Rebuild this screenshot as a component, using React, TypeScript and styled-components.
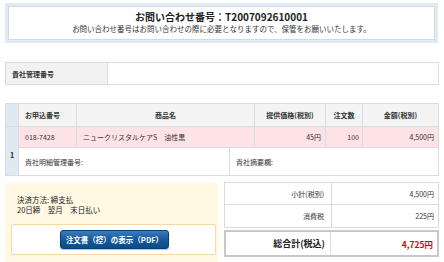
import React from "react";
import styled, { createGlobalStyle } from "styled-components";

const Global = createGlobalStyle`
  html, body { margin: 0; padding: 0; background: #fff; }
  body { font-family: "Noto Sans CJK JP", "Noto Sans", sans-serif; color: #333; }
  * { box-sizing: border-box; }
`;

const Page = styled.div`
  width: 444px;
  height: 262px;
  overflow: hidden;
  padding: 3px 5px 0 5px;
`;

const TopBox = styled.div`
  margin-right: 1px;
  border: 3px solid #e1eaf2;
  box-shadow: inset 0 0 0 1px #cddbe6;
  background: #fff;
  padding: 5px 0 6px;
  text-align: center;
`;

const Title = styled.div`
  font-size: 10px;
  font-weight: bold;
  line-height: 12px;
  color: #222;
`;

const Sub = styled.div`
  font-size: 7.5px;
  line-height: 11px;
  color: #333;
`;

const Grid = styled.div<{ $cols: string; $rows: string; $mt?: number }>`
  display: grid;
  grid-template-columns: ${(p) => p.$cols};
  grid-template-rows: ${(p) => p.$rows};
  gap: 1px;
  padding: 1px;
  background: #dcdcdc;
  margin-top: ${(p) => p.$mt || 0}px;
`;

const Cell = styled.div<{
  $bg?: string;
  $align?: "left" | "center" | "right";
  $bold?: boolean;
  $pr?: number;
}>`
  background: ${(p) => p.$bg || "#fff"};
  display: flex;
  align-items: center;
  justify-content: ${(p) =>
    p.$align === "center" ? "center" : p.$align === "right" ? "flex-end" : "flex-start"};
  font-size: 7px;
  font-weight: ${(p) => (p.$bold ? "bold" : "normal")};
  color: #333;
  padding: 0 ${(p) => p.$pr ?? (p.$align === "right" ? 4 : 6)}px 0 6px;
  white-space: nowrap;
  overflow: hidden;
`;

const IndexCell = styled.div<{ $rows?: number }>`
  background: #dfe9f1;
  grid-row: ${(p) => (p.$rows ? `span ${p.$rows}` : "auto")};
  display: flex;
  align-items: center;
  justify-content: center;
  padding-top: 8px;
  font-size: 7px;
  font-weight: bold;
  color: #222;
`;

const SubRow = styled.div`
  grid-column: span 5;
  display: grid;
  grid-template-columns: 210px 1fr;
  gap: 1px;
  background: #dcdcdc;
`;

const Bottom = styled.div`
  margin-top: 6px;
  display: grid;
  grid-template-columns: 213px 215px;
  column-gap: 6px;
  align-items: start;
`;

const PayPanel = styled.div`
  margin-top: 1px;
  background: #fff8e2;
  padding: 12px 2px 10px 6px;
  height: 81px;
`;

const PayText = styled.div`
  font-size: 7.5px;
  line-height: 10px;
  padding-left: 6px;
  color: #222;
`;

const BtnBox = styled.div`
  margin-top: 9px;
  border: 1px solid #f6d7a6;
  border-radius: 2px;
  background: #fff;
  height: 31px;
  display: flex;
  align-items: center;
  justify-content: center;
`;

const PdfButton = styled.button`
  width: 109px;
  height: 19px;
  border: 1px solid #0b3e70;
  border-radius: 3px;
  background: linear-gradient(#3a7cbc, #165a9b 50%, #0c4b87);
  color: #fff;
  font-family: inherit;
  font-size: 7.5px;
  font-weight: bold;
  padding: 0;
  margin-left: 2px;
  box-shadow: 0 1px 1px rgba(0, 0, 0, 0.25);
`;

const Summary = styled.div`
  display: flex;
  flex-direction: column;
  gap: 2px;
`;

const TotalRow = styled.div`
  display: grid;
  grid-template-columns: 104px 1fr;
  gap: 1px;
  height: 27px;
  border: 2px solid #c8c8c8;
  background: #dedede;
`;

const TotalCell = styled.div<{ $red?: boolean }>`
  background: #fff;
  display: flex;
  align-items: center;
  justify-content: flex-end;
  padding: 0 ${(p) => (p.$red ? 4 : 5)}px 0 0;
  font-size: ${(p) => (p.$red ? 8.5 : 9)}px;
  font-weight: bold;
  color: ${(p) => (p.$red ? "#e00000" : "#222")};
`;

const PINK = "#fde2e6";
const HEAD = "#f4f4f4";

export default function App() {
  return (
    <>
      <Global />
      <Page>
        <TopBox>
          <Title>お問い合わせ番号：T2007092610001</Title>
          <Sub>お問い合わせ番号はお問い合わせの際に必要となりますので、保管をお願いいたします。</Sub>
        </TopBox>

        <Grid $cols="101px 1fr" $rows="21px" $mt={19}>
          <Cell $bg="#f2f2f2" $bold>貴社管理番号</Cell>
          <Cell />
        </Grid>

        <Grid $cols="12px 57px 177px 70px 36px 1fr" $rows="22px 20px 27px" $mt={18}>
          <IndexCell />
          <Cell $bg={HEAD} $bold>お申込番号</Cell>
          <Cell $bg={HEAD} $bold $align="center">商品名</Cell>
          <Cell $bg={HEAD} $bold $align="center">提供価格(税別)</Cell>
          <Cell $bg={HEAD} $bold $align="center">注文数</Cell>
          <Cell $bg={HEAD} $bold $align="center">金額(税別)</Cell>

          <IndexCell $rows={2}>1</IndexCell>
          <Cell $bg={PINK}>018-7428</Cell>
          <Cell $bg={PINK}>ニュークリスタルケアS　油性黒</Cell>
          <Cell $bg={PINK} $align="right">45円</Cell>
          <Cell $bg={PINK} $align="right" $pr={3}>100</Cell>
          <Cell $bg={PINK} $align="right">4,500円</Cell>

          <SubRow>
            <Cell>貴社明細管理番号:</Cell>
            <Cell>貴社摘要欄:</Cell>
          </SubRow>
        </Grid>

        <Bottom>
          <PayPanel>
            <PayText>決済方法: 締支払</PayText>
            <PayText>20日締　翌月　末日払い</PayText>
            <BtnBox>
              <PdfButton>注文書（控）の表示（PDF）</PdfButton>
            </BtnBox>
          </PayPanel>

          <Summary>
            <Grid $cols="106px 1fr" $rows="21px 22px">
              <Cell $align="right" $pr={7}>小計(税別)</Cell>
              <Cell $align="right">4,500円</Cell>
              <Cell $align="right" $pr={7}>消費税</Cell>
              <Cell $align="right">225円</Cell>
            </Grid>
            <TotalRow>
              <TotalCell>総合計(税込)</TotalCell>
              <TotalCell $red>4,725円</TotalCell>
            </TotalRow>
          </Summary>
        </Bottom>
      </Page>
    </>
  );
}
